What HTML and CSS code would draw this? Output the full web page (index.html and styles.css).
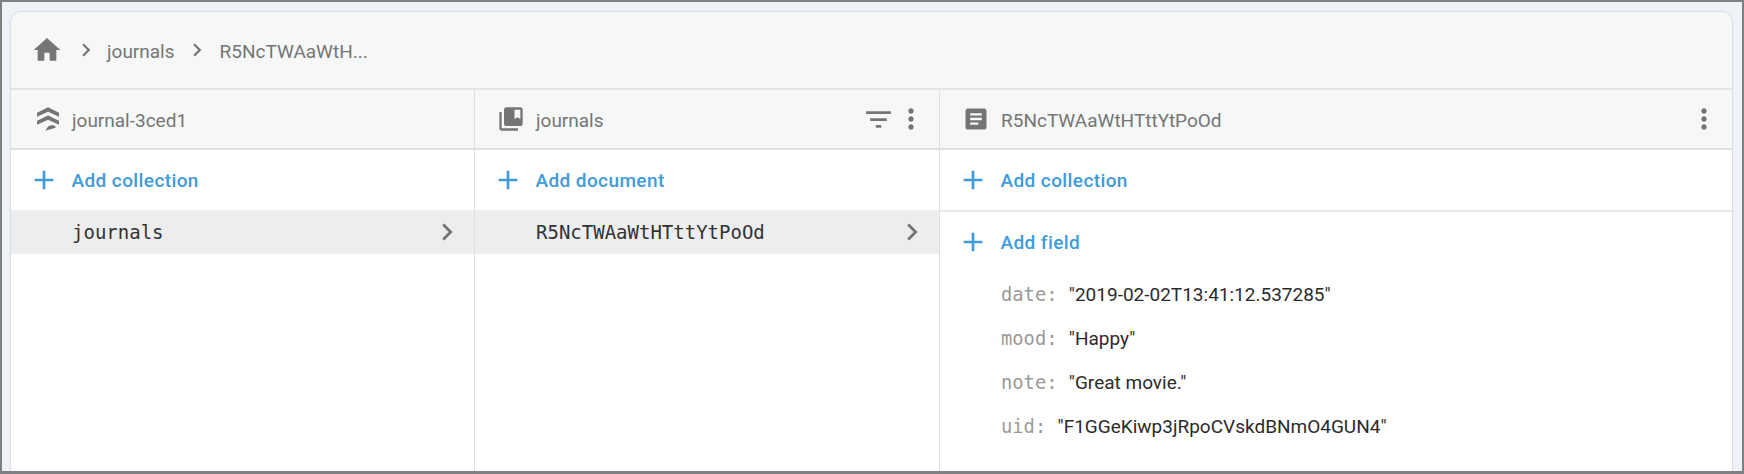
FILE: index.html

```html
<!DOCTYPE html>
<html lang="en">

<head>
    <meta charset="UTF-8">
    <meta name="viewport" content="width=device-width, initial-scale=1.0">
    <title>Cloud Firestore data</title>
    <link rel="stylesheet" href="styles.css">
</head>

<body>
    <div class="frame">
        <main class="card">
            <nav class="crumbs">
                <svg class="icon icon-home" viewBox="0 0 24 24"><path d="M10 20v-6h4v6h5v-8h3L12 3 2 12h3v8z"/></svg>
                <svg class="icon icon-sep" viewBox="0 0 24 24"><path d="M10 6L8.59 7.41 13.17 12l-4.58 4.59L10 18l6-6z"/></svg>
                <a class="crumb" href="#journals">journals</a>
                <svg class="icon icon-sep" viewBox="0 0 24 24"><path d="M10 6L8.59 7.41 13.17 12l-4.58 4.59L10 18l6-6z"/></svg>
                <a class="crumb" href="#doc">R5NcTWAaWtH...</a>
            </nav>

            <div class="columns">
                <section class="col">
                    <header class="col-head">
                        <svg class="icon icon-head" viewBox="0 0 24 24"><path d="M12.900 2l9.400 4.600V10l-9.400-4.300L3.500 10V6.600zM12.900 9l9.400 4.600V17l-9.400-4.400L3.500 17v-3.400zM10.500 22l2.500-3.500q2.500-1.700 5.800-.7l.7 1.700z"/></svg>
                        <span class="col-title">journal-3ced1</span>
                    </header>
                    <button class="add-btn" type="button">
                        <svg class="icon icon-add" viewBox="0 0 24 24"><path d="M19 13h-6v6h-2v-6H5v-2h6V5h2v6h6v2z"/></svg>
                        <span class="add-label">Add collection</span>
                    </button>
                    <div class="row-selected">
                        <span class="row-label">journals</span>
                        <svg class="icon icon-row" viewBox="0 0 24 24"><path d="M10 6L8.59 7.41 13.17 12l-4.58 4.59L10 18l6-6z"/></svg>
                    </div>
                </section>

                <section class="col">
                    <header class="col-head">
                        <svg class="icon icon-head" viewBox="0 0 24 24"><path d="M4 6H2v14c0 1.100.9 2 2 2h14v-2H4V6zm16-4H8c-1.100 0-2 .9-2 2v12c0 1.100.9 2 2 2h12c1.100 0 2-.9 2-2V4c0-1.100-.9-2-2-2zm0 10l-2.500-1.500L15 12V4h5v8z"/></svg>
                        <span class="col-title">journals</span>
                        <svg class="icon icon-filter" viewBox="0 0 24 24"><path d="M10 18h4v-2h-4v2zM3 6v2h18V6H3zm3 7h12v-2H6v2z"/></svg>
                        <svg class="icon icon-more" viewBox="0 0 24 24"><path d="M12 8c1.100 0 2-.9 2-2s-.9-2-2-2-2 .9-2 2 .9 2 2 2zm0 2c-1.100 0-2 .9-2 2s.9 2 2 2 2-.9 2-2-.9-2-2-2zm0 6c-1.100 0-2 .9-2 2s.9 2 2 2 2-.9 2-2-.9-2-2-2z"/></svg>
                    </header>
                    <button class="add-btn" type="button">
                        <svg class="icon icon-add" viewBox="0 0 24 24"><path d="M19 13h-6v6h-2v-6H5v-2h6V5h2v6h6v2z"/></svg>
                        <span class="add-label">Add document</span>
                    </button>
                    <div class="row-selected">
                        <span class="row-label">R5NcTWAaWtHTttYtPoOd</span>
                        <svg class="icon icon-row" viewBox="0 0 24 24"><path d="M10 6L8.59 7.41 13.17 12l-4.58 4.59L10 18l6-6z"/></svg>
                    </div>
                </section>

                <section class="col col-last">
                    <header class="col-head">
                        <svg class="icon icon-head" viewBox="0 0 24 24"><path d="M19 3H5c-1.100 0-2 .9-2 2v14c0 1.100.9 2 2 2h14c1.100 0 2-.9 2-2V5c0-1.100-.9-2-2-2zm-5 14H7v-2h7v2zm3-4H7v-2h10v2zm0-4H7V7h10v2z"/></svg>
                        <span class="col-title">R5NcTWAaWtHTttYtPoOd</span>
                        <svg class="icon icon-more" viewBox="0 0 24 24"><path d="M12 8c1.100 0 2-.9 2-2s-.9-2-2-2-2 .9-2 2 .9 2 2 2zm0 2c-1.100 0-2 .9-2 2s.9 2 2 2 2-.9 2-2-.9-2-2-2zm0 6c-1.100 0-2 .9-2 2s.9 2 2 2 2-.9 2-2-.9-2-2-2z"/></svg>
                    </header>
                    <button class="add-btn add-btn-ruled" type="button">
                        <svg class="icon icon-add" viewBox="0 0 24 24"><path d="M19 13h-6v6h-2v-6H5v-2h6V5h2v6h6v2z"/></svg>
                        <span class="add-label">Add collection</span>
                    </button>
                    <button class="add-btn add-field" type="button">
                        <svg class="icon icon-add" viewBox="0 0 24 24"><path d="M19 13h-6v6h-2v-6H5v-2h6V5h2v6h6v2z"/></svg>
                        <span class="add-label">Add field</span>
                    </button>
                    <ul class="fields">
                        <li><span class="field-key">date: </span><span class="field-value">"2019-02-02T13:41:12.537285"</span></li>
                        <li><span class="field-key">mood: </span><span class="field-value">"Happy"</span></li>
                        <li><span class="field-key">note: </span><span class="field-value">"Great movie."</span></li>
                        <li><span class="field-key">uid: </span><span class="field-value">"F1GGeKiwp3jRpoCVskdBNmO4GUN4"</span></li>
                    </ul>
                </section>
            </div>
        </main>
    </div>
</body>
</html>
```

FILE: styles.css

```css
* {
    box-sizing: border-box;
}

html,
body {
    height: 100%;
}

body {
    margin: 0;
    font-family: Roboto, sans-serif;
    color: #212121;
    overflow: hidden;
}

.frame {
    height: 474px;
    padding: 10px 10px 0 9px;
    background-color: #eff2f6;
    border: solid #7f8083;
    border-width: 2px 2px 3px 2px;
    overflow: hidden;
}

.card {
    display: flex;
    flex-direction: column;
    height: 100%;
    background-color: #ffffff;
    border-radius: 10px 10px 0 0;
    box-shadow: 0 0 2px rgba(0, 0, 0, 0.3);
}

.icon {
    flex: none;
    fill: #757575;
}

.crumbs {
    display: flex;
    align-items: center;
    height: 78px;
    padding-left: 20px;
    background-color: #f6f8f8;
    border-bottom: 2px solid #e3e5e5;
    border-radius: 10px 10px 0 0;
}

.icon-home {
    width: 32px;
    height: 32px;
}

.icon-sep {
    width: 26px;
    height: 26px;
    margin: 0 8px 0 10px;
}

.crumb {
    padding-top: 2px;
    color: #757575;
    font-size: 19px;
    text-decoration: none;
}

.crumb + .icon-sep {
    margin-left: 9px;
    margin-right: 10px;
}

.columns {
    flex: 1;
    display: grid;
    grid-template-columns: 464px 465px 1fr;
}

.col {
    display: flex;
    flex-direction: column;
    border-right: 1px solid #e0e0e0;
}

.col-last {
    border-right: none;
}

.col-head {
    display: flex;
    align-items: center;
    height: 60px;
    padding: 0 12px 0 22px;
    background-color: #f6f8f8;
    border-bottom: 2px solid #dfe1e1;
}

.icon-head {
    width: 28px;
    height: 28px;
    margin-right: 11px;
}

.col-title {
    flex: 1;
    padding-top: 2px;
    color: #757575;
    font-size: 19px;
}

.icon-filter {
    width: 33px;
    height: 33px;
}

.icon-more {
    width: 32px;
    height: 32px;
}

.add-btn {
    display: flex;
    align-items: center;
    width: 100%;
    height: 60px;
    padding: 0 0 0 17px;
    background: none;
    border: none;
    color: #3f9bdc;
    font-family: Roboto, sans-serif;
    font-size: 19px;
    font-weight: 500;
    letter-spacing: 0.4px;
    text-align: left;
}

.add-label {
    padding-top: 1px;
}

.add-btn .icon-add {
    width: 32px;
    height: 32px;
    margin-right: 11.5px;
    fill: #3f9bdc;
}

.add-btn-ruled {
    height: 62px;
    border-bottom: 2px solid #e8e8e8;
}

.add-field {
    height: 58px;
    margin: 1px 0;
}

.row-selected {
    display: flex;
    align-items: center;
    justify-content: space-between;
    height: 44px;
    padding: 0 10px 0 61px;
    background-color: #ecedef;
}

.row-label {
    font-family: "DejaVu Sans Mono", monospace;
    font-size: 19px;
    color: #333333;
}

.icon-row {
    width: 34px;
    height: 34px;
}

.fields {
    margin: 0;
    padding: 1px 0 0 61px;
    list-style: none;
}

.fields li {
    height: 44px;
    line-height: 44px;
    white-space: pre;
}

.field-key {
    font-family: "DejaVu Sans Mono", monospace;
    font-size: 18.8px;
    color: #9a9a9a;
}

.field-value {
    font-size: 19px;
    color: #2b2b2b;
}
```
